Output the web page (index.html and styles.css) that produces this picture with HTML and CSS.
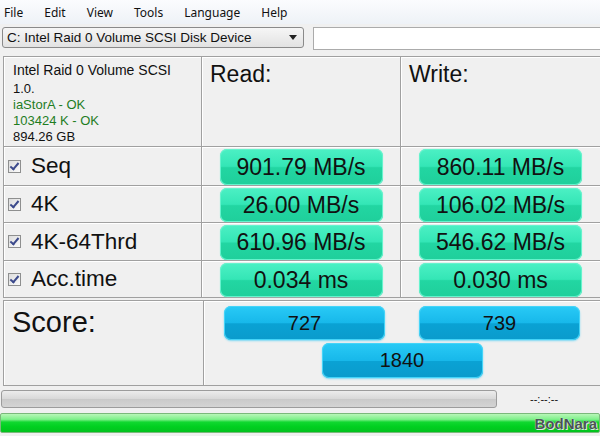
FILE: index.html
```html
<!DOCTYPE html>
<html lang="en">

<head>
    <meta charset="UTF-8">
    <title>AS SSD Benchmark</title>
    <link rel="stylesheet" href="styles.css">
</head>

<body>
    <div class="menubar">
        <span>File</span>
        <span>Edit</span>
        <span>View</span>
        <span>Tools</span>
        <span>Language</span>
        <span>Help</span>
    </div>

    <div class="toolbar">
        <div class="drive-select">
            <span>C: Intel Raid 0 Volume SCSI Disk Device</span>
            <svg width="8" height="5" viewBox="0 0 8 5"><path d="M0 0h8L4 5z" fill="#222"/></svg>
        </div>
        <div class="drive-field"></div>
    </div>

    <div class="results">
        <div class="cell info">
            <div class="info-name">Intel Raid 0 Volume SCSI</div>
            <div>1.0.</div>
            <div class="ok">iaStorA - OK</div>
            <div class="ok">103424 K - OK</div>
            <div>894.26 GB</div>
        </div>
        <div class="cell head">Read:</div>
        <div class="cell head">Write:</div>

        <div class="cell test"><span class="check"></span>Seq</div>
        <div class="cell value"><div class="box">901.79 MB/s</div></div>
        <div class="cell value"><div class="box">860.11 MB/s</div></div>

        <div class="cell test"><span class="check"></span>4K</div>
        <div class="cell value"><div class="box">26.00 MB/s</div></div>
        <div class="cell value"><div class="box">106.02 MB/s</div></div>

        <div class="cell test"><span class="check"></span>4K-64Thrd</div>
        <div class="cell value"><div class="box">610.96 MB/s</div></div>
        <div class="cell value"><div class="box">546.62 MB/s</div></div>

        <div class="cell test"><span class="check"></span>Acc.time</div>
        <div class="cell value"><div class="box">0.034 ms</div></div>
        <div class="cell value"><div class="box">0.030 ms</div></div>
    </div>

    <div class="score">
        <div class="cell score-label">Score:</div>
        <div class="cell score-values">
            <div class="score-row">
                <div class="box blue">727</div>
                <div class="box blue">739</div>
            </div>
            <div class="score-row total">
                <div class="box blue">1840</div>
            </div>
        </div>
    </div>

    <div class="status">
        <div class="progress"></div>
        <div class="time">--:--:--</div>
    </div>

    <div class="done">
        <span class="watermark">BodNara</span>
    </div>
</body>

</html>
```

FILE: styles.css
```css
body {
    margin: 0;
    width: 600px;
    height: 436px;
    overflow: hidden;
    background-color: #f0f0f0;
    font-family: 'Liberation Sans', Arial, sans-serif;
    color: #111;
}

.menubar {
    height: 24px;
    display: flex;
    align-items: center;
    gap: 21px;
    padding-left: 4px;
    font-family: 'Noto Sans', sans-serif;
    font-size: 12px;
    background: linear-gradient(#fbfcfe, #eef2f7);
}

.toolbar {
    display: flex;
    align-items: flex-start;
    height: 29px;
    padding-top: 3px;
    padding-left: 2px;
}

.drive-select {
    width: 290px;
    height: 19px;
    padding: 0 6px 0 4px;
    display: flex;
    align-items: center;
    justify-content: space-between;
    border: 1px solid #8a8a8a;
    border-radius: 3px;
    background: linear-gradient(#f6f6f6, #e2e2e2);
    font-size: 13.5px;
}

.drive-field {
    margin-left: 9px;
    flex: 1;
    height: 21px;
    border: 1px solid #ababab;
    border-right: none;
    background-color: #fff;
}

.results {
    display: grid;
    grid-template-columns: 198px 199px 1fr;
    grid-template-rows: 90px 39px 37px 38px 37px;
    margin-left: 3px;
    border-bottom: 1px solid #a0a0a0;
}

.cell {
    border-top: 1px solid #a0a0a0;
    border-left: 1px solid #a0a0a0;
    box-shadow: inset 1px 1px 0 #fff;
}

.info {
    padding: 5px 0 0 9px;
    font-size: 13px;
    line-height: 16px;
}

.info-name {
    font-size: 14px;
    margin-bottom: 3px;
}

.ok {
    color: #1f7d1f;
}

.head {
    padding: 4px 0 0 8px;
    font-size: 23px;
}

.test {
    display: flex;
    align-items: center;
    padding-left: 4px;
    font-size: 22.5px;
}

.check {
    width: 11px;
    height: 11px;
    margin-right: 10px;
    border: 1px solid #8e8f8f;
    background: linear-gradient(135deg, #dcdcdc, #fbfbfb);
    position: relative;
}

.check::after {
    content: "";
    position: absolute;
    left: 3px;
    top: 0px;
    width: 3px;
    height: 7px;
    border-right: 2px solid #3c4a8c;
    border-bottom: 2px solid #3c4a8c;
    transform: rotate(40deg);
}

.value {
    display: flex;
    justify-content: center;
    padding-top: 2px;
}

.box {
    width: 163px;
    display: flex;
    align-items: center;
    justify-content: center;
    border-radius: 7px;
    font-size: 23px;
    background: linear-gradient(#4cf0c4 0%, #34e6b6 48%, #22d6a2 52%, #1fcf9b 100%);
    box-shadow: inset 0 0 0 1px #66f3cd, 0 0 1px #7ef4d2;
}

.score {
    display: grid;
    grid-template-columns: 200px 1fr;
    height: 85px;
    margin-top: 2px;
    margin-left: 3px;
    border-bottom: 1px solid #a0a0a0;
}

.score-label {
    padding: 5px 0 0 8px;
    font-size: 29px;
}

.score-values {
    padding: 5px 0 0 20px;
}

.score-row {
    display: flex;
    justify-content: space-between;
    width: 356px;
}

.score-row.total {
    justify-content: center;
    margin-top: 3px;
}

.box.blue {
    width: 161px;
    height: 34px;
    font-size: 20px;
    background: linear-gradient(#29caf6 0%, #17b8ea 50%, #0aa2d4 52%, #0a9bcc 100%);
    box-shadow: inset 0 0 0 1px #44d4f8, 0 1px 2px #7ad8f4;
}

.score-row.total .box.blue {
    height: 35px;
}

.status {
    display: flex;
    align-items: center;
    height: 24px;
    margin-top: 1px;
}

.progress {
    width: 494px;
    height: 16px;
    margin-left: 1px;
    border: 1px solid #9c9c9c;
    border-radius: 3px;
    background: linear-gradient(#ececec, #d8d8d8 50%, #cacaca 52%, #d4d4d4);
}

.time {
    margin-left: 33px;
    font-size: 11px;
}

.done {
    position: relative;
    height: 18px;
    margin-top: 2px;
    border: 1px solid #7bb87b;
    border-radius: 2px;
    background: linear-gradient(#b8f7b8 0%, #7ef08a 30%, #10d830 45%, #00d020 70%, #02c21e 100%);
}

.watermark {
    position: absolute;
    right: 2px;
    top: 1px;
    font-size: 15px;
    line-height: 17px;
    font-weight: bold;
    color: #4a5454;
    text-shadow: 0 0 1px #fff, 1px 1px 0 #e0e0e0;
}
```
